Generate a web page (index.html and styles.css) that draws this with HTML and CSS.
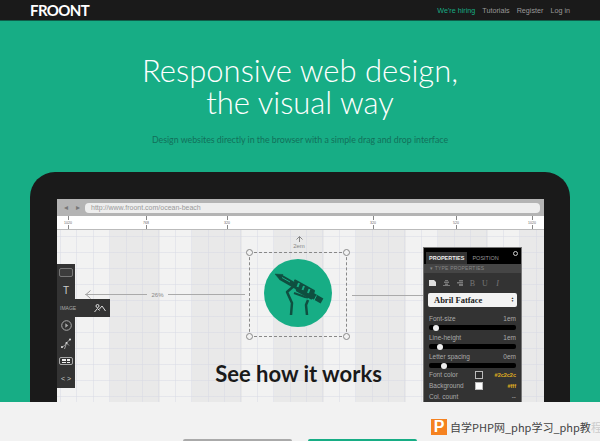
FILE: index.html
```html
<!DOCTYPE html>
<html lang="en">
<head>
    <meta charset="UTF-8">
    <meta name="viewport" content="width=device-width, initial-scale=1.0">
    <title>Froont</title>
    <link rel="stylesheet" href="styles.css">
</head>
<body>
    <header class="topbar">
        <a class="logo">FROONT</a>
        <nav class="topnav">
            <a class="hiring">We're hiring</a>
            <a>Tutorials</a>
            <a>Register</a>
            <a>Log in</a>
        </nav>
    </header>

    <section class="hero">
        <h1>Responsive web design,<br>the visual way</h1>
        <p class="lead">Design websites directly in the browser with a simple drag and drop interface</p>

        <div class="tablet">
            <div class="screen">
                <div class="browserbar">
                    <span class="nav-arrow">&#9666;</span>
                    <span class="nav-arrow">&#9656;</span>
                    <div class="urlbox">http://www.froont.com/ocean-beach</div>
                </div>
                <div class="ruler">
                    <span class="mark">1020</span>
                    <span class="mark">768</span>
                    <span class="mark">320</span>
                    <span class="monitor">
                        <svg width="8" height="8" viewBox="0 0 8 8"><path d="M0 0h8v5.500H5v1h1V8H2V6.500h1v-1H0z" fill="#444"/></svg>
                    </span>
                    <span class="mark">320</span>
                    <span class="mark">520</span>
                    <span class="mark">1020</span>
                </div>
                <div class="canvas">
                    <div class="tools">
                        <div class="tool"><span class="tool-rect"></span></div>
                        <div class="tool tool-t">T</div>
                        <div class="tool tool-image">
                            <span>IMAGE</span>
                            <svg width="12" height="9" viewBox="0 0 12 9" fill="none" stroke="#ddd" stroke-width="1"><circle cx="3.500" cy="2" r="1.500"/><path d="M.5 8 3.500 4.500l2 2M5 5.500 8 2l3.500 5"/></svg>
                        </div>
                        <div class="tool">
                            <svg width="11" height="11" viewBox="0 0 11 11" fill="none" stroke="#aaa"><circle cx="5.500" cy="5.500" r="4.800"/><path d="M4.300 3.300 7.300 5.500 4.300 7.700z" fill="#aaa" stroke="none"/></svg>
                        </div>
                        <div class="tool">
                            <svg width="12" height="12" viewBox="0 0 12 12" fill="none" stroke="#bbb" stroke-width=".8"><path d="M1 9.500C3.500 9 5 7 6.500 5S9 2.500 11 1"/><circle cx="2" cy="9" r="1" fill="#ddd" stroke="none"/><circle cx="6.500" cy="5" r="1" fill="#ddd" stroke="none"/><circle cx="10" cy="1.500" r="1" fill="#ddd" stroke="none"/><path d="M4.500 11 6.500 5l2.500 2.500"/></svg>
                        </div>
                        <div class="tool">
                            <span class="tool-grid"><i></i><i></i><i></i><i></i></span>
                        </div>
                        <div class="tool tool-code">&lt; &gt;</div>
                    </div>

                    <div class="measure measure-left">
                        <svg class="arrow-head" width="6" height="9" viewBox="0 0 6 9" fill="none" stroke="#999"><path d="M5.500 .5 1 4.500l4.500 4"/></svg>
                        <span class="measure-line measure-long"></span>
                        <span class="measure-text">26%</span>
                        <span class="measure-line"></span>
                    </div>
                    <span class="measure-right"></span>
                    <div class="gap-label">
                        <svg width="7" height="6" viewBox="0 0 7 6" fill="none" stroke="#888"><path d="M.5 3.500l3-3 3 3M3.500 .5V6"/></svg>
                        <span>2em</span>
                    </div>

                    <div class="selection">
                        <i class="handle h-tl"></i><i class="handle h-tr"></i><i class="handle h-bl"></i><i class="handle h-br"></i>
                        <svg class="badge" width="68" height="68" viewBox="0 0 68 68">
                            <circle cx="34" cy="34" r="34" fill="#17ad85"/>
                            <g fill="none" stroke="#0f4f40" stroke-linejoin="round">
                                <path d="M11 15l8 .5-3 5.500z" fill="#0f4f40" stroke-width=".5"/>
                                <path d="M17 18.500 58 42" stroke-width="5.500"/>
                                <path d="M31 21.500 50 32 47.500 39.500 33 31.500z" fill="#0f4f40" stroke-width="2"/>
                                <path d="M18 18.500l8 4.500M52.500 36.500l-2.500 5" stroke="#17ad85" stroke-width="1"/>
                                <path d="M35 24l-1.500 4M40 27l-1.500 4M45.500 30l-1.500 4" stroke="#17ad85" stroke-width="2"/>
                                <path d="M30 34l11 4 3 .5" stroke-width="2"/>
                                <path d="M31 26 23 33 28 44 27 56" stroke-width="2.500"/>
                                <path d="M44 41 42 46 43 56" stroke-width="2.500"/>
                            </g>
                        </svg>
                    </div>

                    <h2 class="cta">See how it works</h2>

                    <aside class="panel">
                        <div class="panel-tabs">
                            <span class="tab active">PROPERTIES</span>
                            <span class="tab">POSITION</span>
                            <span class="gear"></span>
                        </div>
                        <div class="panel-head">&#9662; TYPE PROPERTIES</div>
                        <div class="panel-icons">
                            <svg class="align-on" width="7" height="6" viewBox="0 0 7 6"><path d="M0 0h5l2 2v4H0z"/></svg>
                            <svg width="7" height="6" viewBox="0 0 7 6"><path d="M2 0h3v1H2zM1 1.500h5v1.500H1zM2 3.500h3V5H2zM0 5h7v1H0z"/></svg>
                            <svg width="7" height="6" viewBox="0 0 7 6"><path d="M3 0h4v1.500H3zM1 2h6v1.500H1zM3 4h4v2H3z"/></svg>
                            <span>B</span>
                            <span>U</span>
                            <span class="style-i">I</span>
                        </div>
                        <div class="font-select">
                            <span>Abril Fatface</span>
                            <span class="updown">&#9650;<br>&#9660;</span>
                        </div>
                        <div class="prop"><span>Font-size</span><span>1em</span></div>
                        <div class="slider"><i class="knob knob-a"></i></div>
                        <div class="prop"><span>Line-height</span><span>1em</span></div>
                        <div class="slider"><i class="knob knob-b"></i></div>
                        <div class="prop"><span>Letter spacing</span><span>0em</span></div>
                        <div class="slider"><i class="knob knob-c"></i></div>
                        <div class="prop prop-color"><span class="prop-name">Font color</span><i class="swatch swatch-dark"></i><span class="hex">#2c2c2c</span></div>
                        <div class="prop prop-color"><span class="prop-name">Background</span><i class="swatch swatch-white"></i><span class="hex">#fff</span></div>
                        <div class="prop prop-color"><span class="prop-name">Col. count</span><span>--</span></div>
                    </aside>
                </div>
            </div>
        </div>
    </section>

    <footer class="footer">
        <a class="btn btn-gray"></a>
        <a class="btn btn-green"></a>
    </footer>

    <div class="watermark">
        <span class="wm-icon">P</span>
        <span class="wm-text">自学PHP网_php学习_php教<span class="wm-fade">程</span></span>
    </div>
</body>
</html>
```

FILE: styles.css
```css
html, body {
    margin: 0;
    height: 441px;
    overflow: hidden;
}
body {
    position: relative;
    font-family: "Liberation Sans", Arial, sans-serif;
    background: #f2f2f2;
}

/* Top bar */
.topbar {
    height: 20px;
    border-bottom: 1px solid #0e5f4a;
    background: #1a1a1a;
    display: flex;
    align-items: center;
    justify-content: space-between;
    padding: 0 30px;
}
.logo {
    color: #fff;
    font-family: Lato, sans-serif;
    font-size: 15px;
    font-weight: 700;
    letter-spacing: -0.6px;
}
.topnav {
    display: flex;
    gap: 7px;
    font-size: 7.200px;
    color: #999;
}
.topnav .hiring {
    color: #17ad85;
}

/* Hero */
.hero {
    height: 381px;
    background: #17ad85;
    text-align: center;
    overflow: hidden;
}
.hero h1 {
    margin: 0;
    padding-top: 33px;
    color: #fff;
    font-family: Lato, sans-serif;
    font-weight: 300;
    font-size: 31px;
    line-height: 32px;
}
.lead {
    margin: 15px 0 0;
    color: #12705a;
    font-family: Lato, sans-serif;
    font-size: 8.800px;
    line-height: 14px;
}

/* Tablet */
.tablet {
    margin: 25px 30px 0;
    height: 230px;
    padding: 27px 26px 0 27px;
    box-sizing: border-box;
    background: #1a1a1a;
    border-radius: 25px 25px 0 0;
}
.screen {
    height: 100%;
    background: #f2f2f2;
    display: flex;
    flex-direction: column;
}
.browserbar {
    height: 17px;
    background: #b4b4b4;
    display: flex;
    align-items: center;
    gap: 6px;
    padding: 0 4px 0 6px;
    box-sizing: border-box;
}
.nav-arrow {
    color: #777;
    font-size: 8px;
    width: 6px;
}
.urlbox {
    flex: 1;
    margin-left: -2px;
    height: 10px;
    line-height: 10px;
    border-radius: 4px;
    background: #eee;
    color: #999;
    font-size: 7px;
    text-align: left;
    padding-left: 6px;
}
.ruler {
    height: 13px;
    border-bottom: 1px solid #bbb;
    background: #fff;
    display: grid;
    grid-template-columns: 78px 81px 72px 74px 83px 76px 1fr;
    padding-left: 11px;
}
.mark {
    position: relative;
    width: 0;
    display: flex;
    justify-content: center;
    align-items: center;
    font-size: 3.500px;
    color: #666;
    white-space: nowrap;
}
.mark::before, .mark::after {
    content: "";
    position: absolute;
    left: 0;
    width: 1px;
    height: 4px;
    background: #888;
}
.mark::before { top: 0; }
.mark::after { bottom: 0; }
.monitor {
    width: 0;
    display: flex;
    justify-content: center;
    align-items: center;
}

/* Grid canvas */
.canvas {
    position: relative;
    flex: 1;
    overflow: hidden;
    background-color: #f2f2f2;
    background-image:
        repeating-linear-gradient(90deg, rgba(215, 217, 228, .5) 0, rgba(215, 217, 228, .5) 1px, transparent 1px, transparent 16.400px),
        repeating-linear-gradient(180deg, rgba(215, 217, 228, .5) 0, rgba(215, 217, 228, .5) 1px, transparent 1px, transparent 16px),
        linear-gradient(90deg, #f2f2f2 0, #f2f2f2 53px, transparent 53px),
        repeating-linear-gradient(90deg, #e9e9e9 0, #e9e9e9 21px, transparent 21px, transparent 53px, #e9e9e9 53px, #e9e9e9 82px);
    background-position: 3px 0, 0 6px, 0 0, 0 0;
}
.tools {
    position: absolute;
    left: 0;
    top: 34px;
    width: 18px;
    background: #333;
    color: #ccc;
}
.tool {
    height: 17.700px;
    display: flex;
    align-items: center;
    justify-content: center;
}
.tool-rect {
    width: 12px;
    height: 7px;
    border: 1px solid #777;
    border-radius: 2px;
    background: #3c3c3c;
}
.tool-t {
    font-size: 10px;
}
.tool-image {
    width: 53px;
    justify-content: space-between;
    background: #333;
    padding: 0 4px 0 3px;
    box-sizing: border-box;
    font-size: 5px;
    color: #aaa;
}
.tool-grid {
    width: 8px;
    height: 4px;
    border: 1px solid #aaa;
    border-radius: 2px;
    padding: 1px 2px;
    display: grid;
    grid-template-columns: 1fr 1fr;
    gap: 1px;
}
.tool-grid i {
    background: #eee;
}
.tool-code {
    font-size: 7px;
}
.measure {
    position: absolute;
    left: 28px;
    top: 60px;
    display: flex;
    align-items: center;
    color: #888;
    font-size: 6px;
}
.arrow-head {
    margin-right: -6px;
}
.measure-line {
    height: 1px;
    background: #aaa;
}
.measure-long {
    width: 62px;
}
.measure-text {
    width: 21px;
    text-align: center;
}
.measure-line:last-child {
    width: 77px;
}
.measure-right {
    position: absolute;
    left: 295px;
    top: 65px;
    width: 71px;
    height: 1px;
    background: #aaa;
}
.gap-label {
    position: absolute;
    left: 232px;
    top: 6px;
    width: 20px;
    display: flex;
    flex-direction: column;
    align-items: center;
    color: #888;
    font-size: 6px;
    line-height: 8px;
}
.selection {
    position: absolute;
    left: 192px;
    top: 22px;
    width: 98px;
    height: 85px;
    border: 1px dashed #888;
    box-sizing: border-box;
}
.handle {
    position: absolute;
    width: 7px;
    height: 7px;
    border: 1px solid #888;
    border-radius: 50%;
    background: #f2f2f2;
    box-sizing: border-box;
}
.h-tl { left: -4px; top: -4px; }
.h-tr { right: -4px; top: -4px; }
.h-bl { left: -4px; bottom: -4px; }
.h-br { right: -4px; bottom: -4px; }
.badge {
    position: absolute;
    left: 14px;
    top: 6px;
}
.cta {
    position: absolute;
    left: 0;
    right: 0;
    top: 130px;
    margin: 0;
    padding-right: 4px;
    color: #1a1a1a;
    font-family: Lato, sans-serif;
    font-weight: 700;
    font-size: 22px;
    line-height: 28px;
    text-align: center;
}

/* Properties panel */
.panel {
    position: absolute;
    left: 366px;
    top: 17px;
    width: 99px;
    height: 155px;
    box-sizing: border-box;
    border: 1px solid #777;
    border-bottom: 0;
    background: #333;
    color: #aaa;
    font-size: 6.500px;
    text-align: left;
}
.panel-tabs {
    height: 16px;
    background: #000;
    display: flex;
    align-items: flex-end;
    padding-left: 2px;
    gap: 2px;
    position: relative;
}
.tab {
    height: 12px;
    line-height: 12px;
    padding: 0 3px;
    font-size: 5.500px;
    color: #999;
}
.tab.active {
    background: #333;
    color: #eee;
    font-weight: 700;
}
.gear {
    position: absolute;
    right: 3px;
    top: 3px;
    width: 3px;
    height: 3px;
    border: 1px solid #ccc;
    border-radius: 50%;
}
.panel-head {
    height: 9px;
    line-height: 9px;
    background: #454545;
    padding-left: 6px;
    font-size: 5px;
    letter-spacing: .2px;
    color: #888;
}
.panel-icons {
    height: 20px;
    display: flex;
    align-items: center;
    gap: 6.500px;
    padding-left: 5px;
    font-family: "Liberation Serif", serif;
    font-size: 8px;
    color: #777;
}
.panel-icons svg {
    fill: #777;
}
.panel-icons .align-on {
    fill: #ddd;
}
.panel-icons span {
    width: 6px;
    text-align: center;
}
.style-i { font-style: italic; }
.font-select {
    height: 14px;
    margin: 0 4px 7px;
    padding: 0 3px 0 6px;
    border-radius: 2px;
    background: #f2f2f2;
    color: #222;
    display: flex;
    align-items: center;
    justify-content: space-between;
    font-family: "Liberation Serif", serif;
    font-weight: 700;
    font-size: 8.500px;
}
.updown {
    font-size: 3px;
    line-height: 3px;
}
.prop {
    height: 9px;
    margin: 0 5px;
    display: flex;
    align-items: center;
    justify-content: space-between;
}
.slider {
    position: relative;
    height: 5px;
    margin: 2px 5px 3px 5px;
    border-radius: 2px;
    background: #000;
}
.knob {
    position: absolute;
    top: -.500px;
    width: 6px;
    height: 6px;
    border-radius: 50%;
    background: #eee;
}
.knob-a { left: 4px; }
.knob-b { left: 8px; }
.knob-c { left: 12px; }
.prop-color {
    height: 11px;
}
.slider + .prop-color {
    margin-top: -2px;
}
.prop-name {
    flex: 1;
}
.swatch {
    width: 6px;
    height: 6px;
    margin-right: 9px;
    border: 1px solid #bbb;
}
.swatch-dark { background: #2c2c2c; }
.swatch-white { background: #fff; }
.hex {
    width: 24px;
    text-align: right;
    color: #e0b020;
    font-weight: 700;
    font-size: 5.500px;
}

/* Footer */
.footer {
    height: 39px;
    padding-top: 37px;
    box-sizing: border-box;
    display: flex;
    justify-content: center;
    gap: 16px;
}
.btn {
    width: 109px;
    height: 2px;
    border-radius: 3px 3px 0 0;
}
.btn-gray { background: #aaa; }
.btn-green { background: #17ad85; }

/* Site watermark over the corner */
.watermark {
    position: absolute;
    left: 431px;
    right: 0;
    top: 419px;
    display: flex;
    align-items: center;
    gap: 3px;
    overflow: hidden;
    white-space: nowrap;
}
.wm-icon {
    flex: none;
    width: 16px;
    height: 16px;
    background: #f58220;
    color: #fff;
    font-weight: 700;
    font-size: 16px;
    line-height: 16px;
    text-align: center;
}
.wm-text {
    font-family: "Noto Sans CJK SC", "Liberation Sans", sans-serif;
    font-size: 11px;
    color: #444;
}
.wm-fade {
    color: #ccc;
}
```
